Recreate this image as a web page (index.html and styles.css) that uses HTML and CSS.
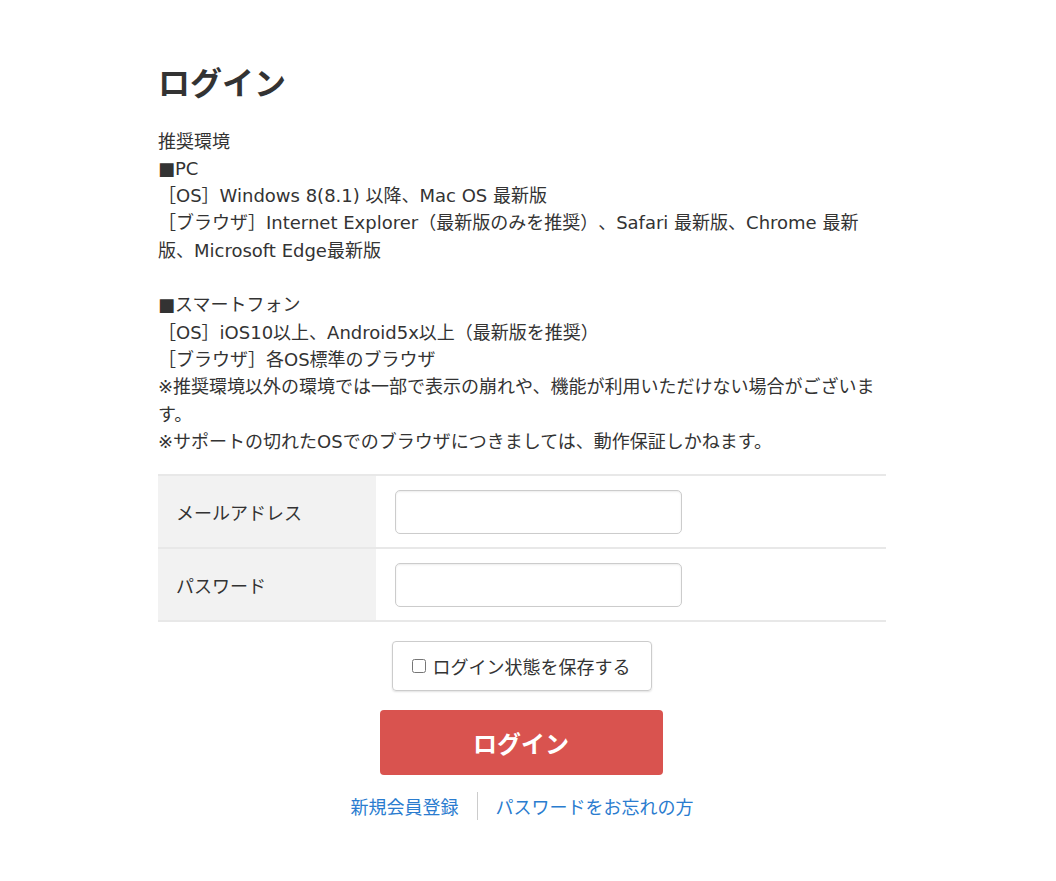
FILE: index.html
```html
<!DOCTYPE html>
<html lang="ja">
<head>
    <meta charset="UTF-8">
    <meta name="viewport" content="width=device-width, initial-scale=1.0">
    <title>ログイン</title>
    <link rel="stylesheet" href="styles.css">
</head>
<body>
    <div class="container">
        <h1>ログイン</h1>

        <div class="notice">
            推奨環境<br>
            ■PC<br>
            ［OS］Windows 8(8.1) 以降、Mac OS 最新版<br>
            ［ブラウザ］Internet Explorer（最新版のみを推奨）、Safari 最新版、Chrome 最新版、Microsoft Edge最新版<br>
            <br>
            ■スマートフォン<br>
            ［OS］iOS10以上、Android5x以上（最新版を推奨）<br>
            ［ブラウザ］各OS標準のブラウザ<br>
            ※推奨環境以外の環境では一部で表示の崩れや、機能が利用いただけない場合がございます。<br>
            ※サポートの切れたOSでのブラウザにつきましては、動作保証しかねます。
        </div>

        <form class="login-form" onsubmit="return false;">
            <table class="form-table">
                <tr>
                    <th>メールアドレス</th>
                    <td><input type="email" class="text-input"></td>
                </tr>
                <tr>
                    <th>パスワード</th>
                    <td><input type="password" class="text-input"></td>
                </tr>
            </table>

            <div class="remember">
                <label class="remember-box">
                    <input type="checkbox">
                    <span>ログイン状態を保存する</span>
                </label>
            </div>

            <div class="submit">
                <button type="submit" class="btn-login">ログイン</button>
            </div>

            <ul class="links">
                <li><a href="#">新規会員登録</a></li>
                <li><a href="#">パスワードをお忘れの方</a></li>
            </ul>
        </form>
    </div>
</body>
</html>
```

FILE: styles.css
```css
body {
    margin: 0;
    background: #fff;
    color: #333;
    font-family: "DejaVu Sans", "Noto Sans CJK JP", sans-serif;
    font-size: 18px;
    text-spacing-trim: space-all;
}

.container {
    width: 728px;
    margin: 0 0 0 158px;
    padding-top: 61px;
}

h1 {
    font-family: "Noto Sans CJK JP", sans-serif;
    font-size: 32px;
    font-weight: bold;
    line-height: 1.3;
    margin: 0 0 25px;
}

.notice {
    font-size: 18px;
    line-height: 27.3px;
    margin-bottom: 19px;
}

.form-table {
    width: 100%;
    border-collapse: collapse;
    border-top: 2px solid #e8e8e8;
    font-family: "Noto Sans CJK JP", sans-serif;
}

.form-table tr {
    border-bottom: 2px solid #e8e8e8;
}

.form-table th {
    width: 218px;
    height: 73px;
    padding: 0 0 0 18px;
    box-sizing: border-box;
    background: #f2f2f2;
    font-weight: normal;
    text-align: left;
    font-size: 18px;
    vertical-align: middle;
}

.form-table td {
    padding: 0 0 0 19px;
    vertical-align: middle;
}

.text-input {
    display: block;
    width: 287px;
    height: 44px;
    box-sizing: border-box;
    border: 1px solid #ccc;
    border-radius: 5px;
    box-shadow: inset 0 1px 2px rgba(0,0,0,0.08);
    font-size: 16px;
    padding: 0 10px;
}

.remember {
    display: flex;
    justify-content: center;
    margin-top: 19px;
    padding-right: 1px;
}

.remember-box {
    display: flex;
    align-items: center;
    width: 260px;
    height: 50px;
    box-sizing: border-box;
    padding-left: 19px;
    border: 1px solid #ccc;
    border-radius: 4px;
    box-shadow: 0 1px 2px rgba(0,0,0,0.12);
    font-family: "Noto Sans CJK JP", sans-serif;
    cursor: pointer;
}

.remember-box input {
    width: 14px;
    height: 14px;
    margin: 0 7px 0 0;
}

.submit {
    display: flex;
    justify-content: center;
    margin-top: 19px;
    padding-right: 2px;
}

.btn-login {
    width: 283px;
    height: 65px;
    border: none;
    border-radius: 4px;
    background: #d9534f;
    color: #fff;
    font-family: "Noto Sans CJK JP", sans-serif;
    font-size: 24px;
    font-weight: bold;
    cursor: pointer;
}

.links {
    list-style: none;
    display: flex;
    justify-content: center;
    margin: 17px 0 0;
    padding: 0;
    font-family: "Noto Sans CJK JP", sans-serif;
    font-size: 18px;
}

.links li {
    padding: 0 18px;
    line-height: 28px;
}

.links li + li {
    border-left: 1px solid #ccc;
}

.links a {
    color: #2a7ccf;
    text-decoration: none;
}
```
